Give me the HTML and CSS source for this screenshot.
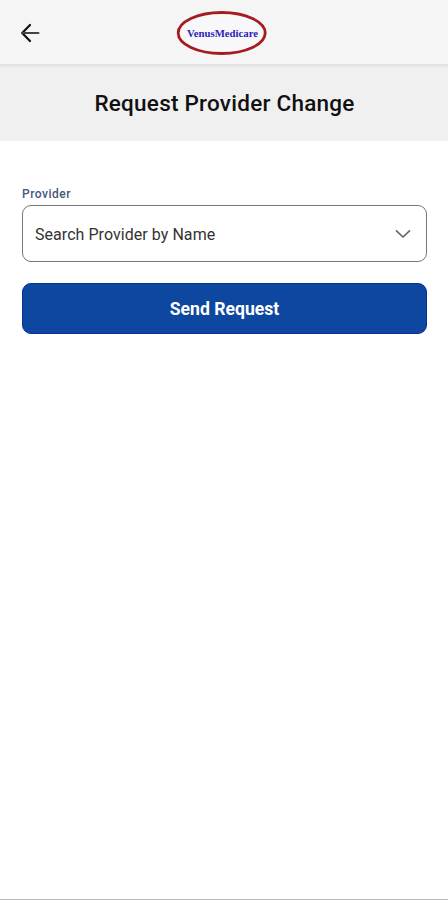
FILE: index.html
```html
<!DOCTYPE html>
<html lang="en">
<head>
<meta charset="utf-8">
<title>Request Provider Change</title>
<link rel="stylesheet" href="styles.css">
</head>
<body>
<div class="screen">
  <header class="topbar">
    <svg class="back" viewBox="0 0 20 20"><path d="M10 2 2.2 10 10 18" stroke="#111" stroke-width="2.2"/><path d="M2.4 10H18.4" stroke="#444" stroke-width="2.2"/></svg>
    <svg class="logo" viewBox="0 0 92 46"><ellipse cx="45.7" cy="23" rx="43.5" ry="20.5" fill="#f8f8fa" stroke="#a61b20" stroke-width="2.8"/><text x="11" y="26.5" textLength="71" lengthAdjust="spacingAndGlyphs">VenusMedicare</text></svg>
  </header>
  <div class="heading"><h1>Request Provider Change</h1></div>
  <main class="form">
    <span class="label">Provider</span>
    <div class="select"><span>Search Provider by Name</span>
      <svg class="chevron" viewBox="0 0 16 10"><path d="M1.5 1.8 8 8 14.5 1.8" stroke="#666" stroke-width="1.7"/></svg>
    </div>
    <button class="send">Send Request</button>
  </main>
</div>
</body>
</html>
```
FILE: styles.css
```css
* { box-sizing: border-box; }
body { margin: 0; font-family: Roboto, sans-serif; background: #fff; }
.screen { height: 900px; display: flex; flex-direction: column; border-bottom: 1px solid #b8b8b8; overflow: hidden; }
svg { fill: none; stroke-linecap: round; stroke-linejoin: round; display: block; }
.topbar { height: 64px; background: #f5f5f5; display: flex; align-items: center; padding: 1px 0 0 20px; flex: none; }
.back { width: 20px; height: 20px; }
.logo { width: 92px; height: 46px; margin-left: 136px; }
.logo text { font: bold 11px "Liberation Serif", serif; fill: #2a22b8; }
.heading { height: 77px; flex: none; background: linear-gradient(#dedede, #e8e8e8 2px, #f0f0f0 5px); display: flex; align-items: center; justify-content: center; padding: 0 0 0 1px; }
h1 { margin: 0; font-size: 22.5px; line-height: 26px; font-weight: 500; color: #111; letter-spacing: 0.24px; white-space: nowrap; }
.form { padding: 46px 21px 0 22px; display: flex; flex-direction: column; }
.label { font-size: 12px; line-height: 14px; font-weight: 500; color: #42597c; letter-spacing: 0.5px; }
.select { margin-top: 4px; height: 57px; border: 1px solid #777; border-radius: 9px; display: flex; align-items: center; justify-content: space-between; padding: 0 15px 0 12px; font-size: 16px; letter-spacing: 0.05px; color: #333; }
.select span { padding-top: 1px; }
.chevron { width: 16px; height: 10px; }
.send { margin-top: 21px; height: 51px; border: 1px solid #0a2f96; border-radius: 9px; background: #0d479f; color: #fff; font: bold 17.6px Roboto, sans-serif; padding: 1px 0 0; }
```
